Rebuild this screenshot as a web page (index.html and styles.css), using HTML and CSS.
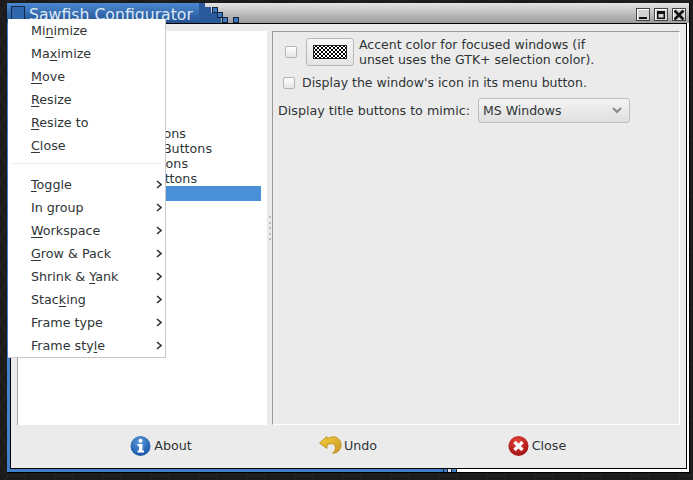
FILE: index.html
```html
<!DOCTYPE html>
<html lang="en">
<head>
    <meta charset="UTF-8">
    <meta name="viewport" content="width=device-width, initial-scale=1.0">
    <title>Sawfish Configurator</title>
    <link rel="stylesheet" href="styles.css">
</head>
<body>
    <div class="desktop">
        <svg class="wallpaper" width="693" height="480">
            <defs>
                <pattern id="hex" width="48" height="28" patternUnits="userSpaceOnUse">
                    <path d="M0 14 L8 0 L24 0 L32 14 L24 28 L8 28 Z M32 14 L48 14" fill="none" stroke="#262626" stroke-width="1"/>
                </pattern>
            </defs>
            <rect width="693" height="480" fill="url(#hex)"/>
        </svg>

        <div class="window">
            <div class="titlebar">
                <svg class="title-steps" width="50" height="20">
                    <path d="M0 0 H6 V4 H12 V10 H18 V15 H22 V20 H0 Z" fill="#2b5a9c"/>
                    <g fill="#3d78bd" stroke="#13263f">
                        <rect x="13.5" y="4.5" width="5" height="5"/>
                        <rect x="18.5" y="9.5" width="5" height="5"/>
                        <rect x="23.5" y="14.5" width="5" height="5"/>
                        <rect x="34.5" y="14.5" width="5" height="5"/>
                    </g>
                </svg>
                <span class="title-icon"></span>
                <span class="title-text">Sawfish Configurator</span>
                <div class="title-buttons">
                    <span class="title-btn"><svg width="10" height="10"><rect x="1" y="7" width="8" height="2" fill="#111"/></svg></span>
                    <span class="title-btn"><svg width="10" height="10"><path d="M1 1 H9 V9 H1 Z M2.5 4 V7.5 H7.5 V4 Z" fill="#111" fill-rule="evenodd"/></svg></span>
                    <span class="title-btn"><svg width="12" height="12"><path d="M1.5 1.5 L10.5 10.5 M10.5 1.5 L1.5 10.5" stroke="#111" stroke-width="2.6"/></svg></span>
                </div>
            </div>

            <div class="client">
                <div class="panes">
                    <div class="tree">
                        <div class="tree-row row-a">Move Icons</div>
                        <div class="tree-row row-b">Title Bar Buttons</div>
                        <div class="tree-row row-c">Menu Icons</div>
                        <div class="tree-row row-d">Window Buttons</div>
                        <div class="tree-row selected"></div>
                    </div>
                    <div class="handle">
                        <i></i><i></i><i></i><i></i><i></i>
                    </div>
                    <div class="settings">
                        <div class="accent-row">
                            <span class="check"></span>
                            <span class="color-btn"><span class="swatch"></span></span>
                            <span class="accent-text">Accent color for focused windows (if<br>unset uses the GTK+ selection color).</span>
                        </div>
                        <div class="icon-row">
                            <span class="check"></span>
                            <span>Display the window's icon in its menu button.</span>
                        </div>
                        <div class="mimic-row">
                            <span class="mimic-label">Display title buttons to mimic:</span>
                            <div class="combo">
                                <span>MS Windows</span>
                                <svg width="10" height="7"><path d="M1 1 L5 5 L9 1" fill="none" stroke="#8a8a8a" stroke-width="2"/></svg>
                            </div>
                        </div>
                    </div>
                </div>

                <div class="footer">
                    <div class="foot-btn">
                        <svg width="21" height="22" viewBox="0 0 21 22">
                            <defs>
                                <radialGradient id="blue" cx="0.45" cy="0.3" r="0.8">
                                    <stop offset="0" stop-color="#5c9be0"/>
                                    <stop offset="1" stop-color="#0c4a9c"/>
                                </radialGradient>
                            </defs>
                            <circle cx="10.5" cy="11" r="10" fill="url(#blue)"/>
                            <circle cx="10.5" cy="5.8" r="2" fill="#fff"/>
                            <path d="M7.5 9 H12.5 V15.5 H14 V17.5 H7.5 V15.5 H9 V11 H7.5 Z" fill="#fff"/>
                        </svg>
                        <span>About</span>
                    </div>
                    <div class="foot-btn undo">
                        <svg width="23" height="22" viewBox="0 0 23 22">
                            <defs>
                                <linearGradient id="gold" x1="0" y1="0" x2="1" y2="1">
                                    <stop offset="0" stop-color="#f6cf3a"/>
                                    <stop offset="1" stop-color="#c9962a"/>
                                </linearGradient>
                            </defs>
                            <path d="M0.5 8 L8 1.5 V4 C11 1.5 16 1 19 3.5 C23 6.5 23 13 19.5 16 C18 17.5 15.5 18.5 13.5 18 C16.5 16 17.5 12.5 15.5 10 C13.5 8 10.5 8.5 8 10 V13.5 Z" fill="url(#gold)" stroke="#b5880f" stroke-width="0.8"/>
                        </svg>
                        <span>Undo</span>
                    </div>
                    <div class="foot-btn">
                        <svg width="21" height="22" viewBox="0 0 21 22">
                            <defs>
                                <radialGradient id="red" cx="0.45" cy="0.3" r="0.8">
                                    <stop offset="0" stop-color="#e8483c"/>
                                    <stop offset="1" stop-color="#96080a"/>
                                </radialGradient>
                            </defs>
                            <circle cx="10.5" cy="11" r="10" fill="url(#red)"/>
                            <path d="M6.5 7 L14.5 15 M14.5 7 L6.5 15" stroke="#fff" stroke-width="3.2"/>
                        </svg>
                        <span>Close</span>
                    </div>
                </div>
            </div>
        </div>

        <div class="menu">
            <div class="menu-item">Mi<u>n</u>imize</div>
            <div class="menu-item">Ma<u>x</u>imize</div>
            <div class="menu-item"><u>M</u>ove</div>
            <div class="menu-item"><u>R</u>esize</div>
            <div class="menu-item"><u>R</u>esize to</div>
            <div class="menu-item"><u>C</u>lose</div>
            <div class="menu-sep"></div>
            <div class="menu-item"><u>T</u>oggle<svg class="arrow" width="6" height="9"><path d="M1 1 L5 4.5 L1 8" fill="none" stroke="#2e3436" stroke-width="1.6"/></svg></div>
            <div class="menu-item">In group<svg class="arrow" width="6" height="9"><path d="M1 1 L5 4.5 L1 8" fill="none" stroke="#2e3436" stroke-width="1.6"/></svg></div>
            <div class="menu-item"><u>W</u>orkspace<svg class="arrow" width="6" height="9"><path d="M1 1 L5 4.5 L1 8" fill="none" stroke="#2e3436" stroke-width="1.6"/></svg></div>
            <div class="menu-item"><u>G</u>row &amp; Pack<svg class="arrow" width="6" height="9"><path d="M1 1 L5 4.5 L1 8" fill="none" stroke="#2e3436" stroke-width="1.6"/></svg></div>
            <div class="menu-item">Shrink &amp; <u>Y</u>ank<svg class="arrow" width="6" height="9"><path d="M1 1 L5 4.5 L1 8" fill="none" stroke="#2e3436" stroke-width="1.6"/></svg></div>
            <div class="menu-item">Stac<u>k</u>ing<svg class="arrow" width="6" height="9"><path d="M1 1 L5 4.5 L1 8" fill="none" stroke="#2e3436" stroke-width="1.6"/></svg></div>
            <div class="menu-item">Frame type<svg class="arrow" width="6" height="9"><path d="M1 1 L5 4.5 L1 8" fill="none" stroke="#2e3436" stroke-width="1.6"/></svg></div>
            <div class="menu-item">Frame sty<u>l</u>e<svg class="arrow" width="6" height="9"><path d="M1 1 L5 4.5 L1 8" fill="none" stroke="#2e3436" stroke-width="1.6"/></svg></div>
        </div>
    </div>
</body>
</html>
```

FILE: styles.css
```css
body {
    margin: 0;
    font-family: "DejaVu Sans", sans-serif;
    font-size: 12.7px;
    color: #2e3436;
}
.desktop {
    position: relative;
    width: 693px;
    height: 480px;
    overflow: hidden;
    background: #1c1c1c;
}
.wallpaper {
    position: absolute;
    left: 0;
    top: 0;
}

/* window frame */
.window {
    position: absolute;
    left: 7px;
    top: 3px;
    width: 683px;
    height: 470px;
    box-sizing: border-box;
    display: flex;
    flex-direction: column;
    padding: 0 2px 3px 3px;
    border-right: 1px solid #000;
    border-bottom: 1px solid #000;
    background: linear-gradient(to right,
        #3f7fca 436px, #123 436px, #123 437px, #3f7fca 437px, #3f7fca 440px,
        #123 440px, #123 441px, #dfe6ee 441px, #dfe6ee 444px,
        #123 444px, #123 445px, #3f7fca 445px, #3f7fca 449px,
        #123 449px, #123 450px, #fff 450px);
}
.titlebar {
    position: relative;
    height: 20px;
    flex: none;
    margin: 0 -2px 0 -3px;
    display: flex;
    align-items: center;
    background: linear-gradient(#e4e4e4, #9c9c9c);
}
.titlebar::before {
    content: "";
    position: absolute;
    left: 0;
    top: 0;
    bottom: 0;
    width: 195px;
    background: linear-gradient(#4a88d2, #24528f);
}
.title-steps {
    position: absolute;
    left: 192px;
    top: 0;
}
.title-icon {
    position: relative;
    flex: none;
    width: 12px;
    height: 12px;
    margin-left: 4px;
    border: 1px solid #12294a;
    background: #2f66ac;
}
.title-text {
    position: relative;
    margin: 2px 0 0 4px;
    font-size: 15.7px;
    color: #dbe8f7;
}
.title-buttons {
    position: absolute;
    right: 3px;
    top: 5px;
    display: flex;
    gap: 4px;
}
.title-btn {
    width: 14px;
    height: 13px;
    box-sizing: border-box;
    display: flex;
    align-items: center;
    justify-content: center;
    border: 1px solid #444;
    box-shadow: inset 1px 1px #fff;
    background: #d4d4d4;
}

/* client area */
.client {
    flex: 1;
    min-height: 0;
    display: flex;
    flex-direction: column;
    border: 1px solid #000;
    background: #ebebeb;
    padding: 7px 6px 0;
}
.panes {
    flex: 1;
    min-height: 0;
    display: flex;
}
.tree {
    width: 250px;
    box-sizing: border-box;
    padding: 95px 6px 0 0;
    border-left: 1px solid #a5a5a5;
    background: #fff;
}
.tree-row {
    height: 15px;
    line-height: 15px;
    text-align: right;
    white-space: nowrap;
}
.row-a { padding-right: 75px; }
.row-b { padding-right: 49px; }
.row-c { padding-right: 73px; }
.row-d { padding-right: 64px; }
.selected {
    background: #4a90d9;
}
.handle {
    width: 5px;
    display: flex;
    flex-direction: column;
    align-items: center;
    justify-content: center;
    gap: 3.5px;
}
.handle i {
    width: 2px;
    height: 2px;
    background: #bbb;
}

/* settings pane */
.settings {
    flex: 1;
    box-sizing: border-box;
    padding: 5px 0 0 5px;
    font-size: 12.5px;
    border: 1px solid;
    border-color: #9a9a9a #fff #fff #9a9a9a;
}
.check {
    flex: none;
    width: 12px;
    height: 12px;
    box-sizing: border-box;
    border: 1px solid #b5b5b5;
    border-radius: 2px;
    background: linear-gradient(#fff, #e6e6e6);
}
.accent-row {
    display: flex;
    align-items: center;
    padding-left: 7px;
}
.color-btn {
    width: 48px;
    height: 28px;
    box-sizing: border-box;
    margin: 0 5px 0 9px;
    display: flex;
    align-items: center;
    justify-content: center;
    border: 1px solid #b8b8b8;
    border-radius: 3px;
    background: linear-gradient(#f6f6f6, #e4e4e4);
}
.swatch {
    width: 34px;
    height: 14px;
    background: repeating-conic-gradient(#000 0 25%, #fff 0 50%) 0 0 / 4px 4px;
    outline: 1px solid #222;
    outline-offset: -1px;
}
.accent-text {
    line-height: 15px;
}
.icon-row {
    display: flex;
    align-items: center;
    gap: 7px;
    margin-top: 8px;
    padding-left: 5px;
    line-height: 15px;
}
.mimic-row {
    display: flex;
    align-items: center;
    margin-top: 8px;
}
.mimic-label {
    width: 200px;
    font-size: 12.7px;
}
.combo {
    width: 152px;
    height: 25px;
    box-sizing: border-box;
    display: flex;
    align-items: center;
    justify-content: space-between;
    padding: 0 7px 0 4px;
    border: 1px solid #bdbdbd;
    border-radius: 3px;
    background: linear-gradient(#f4f4f4, #dfdfdf);
}

/* footer */
.footer {
    height: 43px;
    box-sizing: border-box;
    padding: 0 0 2px 50px;
    flex: none;
    display: grid;
    grid-template-columns: repeat(3, 188px);
}
.foot-btn {
    display: flex;
    align-items: center;
    justify-content: center;
    gap: 3px;
}
.undo {
    gap: 2px;
    padding-right: 2px;
}

/* popup menu */
.menu {
    position: absolute;
    left: 8px;
    top: 19px;
    width: 158px;
    box-sizing: border-box;
    background: #fff;
    border-right: 1px solid #c8c8c8;
    border-bottom: 1px solid #c8c8c8;
}
.menu-item {
    position: relative;
    height: 23px;
    line-height: 23px;
    padding-left: 23px;
}
.menu-item u {
    text-underline-offset: 2px;
}
.arrow {
    position: absolute;
    right: 3px;
    top: 7px;
}
.menu-sep {
    height: 16px;
    margin: 0 4px;
    background: linear-gradient(#ececec, #ececec) 0 6px / 100% 1px no-repeat;
}
```
